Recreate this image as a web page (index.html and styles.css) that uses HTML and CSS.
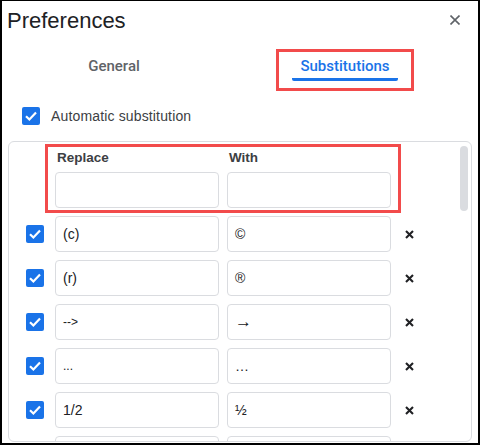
FILE: index.html
```html
<!DOCTYPE html>
<html lang="en">
<head>
<meta charset="utf-8">
<title>Preferences</title>
<link rel="stylesheet" href="styles.css">
</head>
<body>
<div class="frame">
  <div class="titlebar">
    <h1 class="title">Preferences</h1>
    <svg class="close" width="10" height="10" viewBox="0 0 10 10"><path d="M0.5 0.5L9.5 9.5M9.5 0.5L0.5 9.5" stroke="#5f6368" stroke-width="1.6" fill="none"/></svg>
  </div>
  <div class="tabs">
    <div class="tab">General</div>
    <div class="tab-active">
      <span class="tab-label">Substitutions</span>
    </div>
  </div>
  <label class="auto">
    <span class="cb"><svg width="18" height="18" viewBox="0 0 18 18"><path d="M4 9.2L7.4 12.5L14 5.6" stroke="#fff" stroke-width="2.2" fill="none"/></svg></span>
    <span class="auto-label">Automatic substitution</span>
  </label>
  <div class="panel">
    <div class="scrollbar"></div>
    <div class="header">
      <div class="header-labels">
        <span class="hl">Replace</span>
        <span class="hl">With</span>
      </div>
      <div class="header-inputs">
        <div class="input"></div>
        <div class="input"></div>
      </div>
    </div>
    <div class="rows">
      <div class="row">
        <span class="cb"><svg width="18" height="18" viewBox="0 0 18 18"><path d="M4 9.2L7.4 12.5L14 5.6" stroke="#fff" stroke-width="2.2" fill="none"/></svg></span>
        <div class="input">(c)</div>
        <div class="input">©</div>
        <svg class="del" width="9" height="9" viewBox="0 0 9 9"><path d="M1 1L8 8M8 1L1 8" stroke="#202124" stroke-width="2.1" fill="none"/></svg>
      </div>
      <div class="row">
        <span class="cb"><svg width="18" height="18" viewBox="0 0 18 18"><path d="M4 9.2L7.4 12.5L14 5.6" stroke="#fff" stroke-width="2.2" fill="none"/></svg></span>
        <div class="input">(r)</div>
        <div class="input">®</div>
        <svg class="del" width="9" height="9" viewBox="0 0 9 9"><path d="M1 1L8 8M8 1L1 8" stroke="#202124" stroke-width="2.1" fill="none"/></svg>
      </div>
      <div class="row">
        <span class="cb"><svg width="18" height="18" viewBox="0 0 18 18"><path d="M4 9.2L7.4 12.5L14 5.6" stroke="#fff" stroke-width="2.2" fill="none"/></svg></span>
        <div class="input small">--&gt;</div>
        <div class="input arrow">→</div>
        <svg class="del" width="9" height="9" viewBox="0 0 9 9"><path d="M1 1L8 8M8 1L1 8" stroke="#202124" stroke-width="2.1" fill="none"/></svg>
      </div>
      <div class="row">
        <span class="cb"><svg width="18" height="18" viewBox="0 0 18 18"><path d="M4 9.2L7.4 12.5L14 5.6" stroke="#fff" stroke-width="2.2" fill="none"/></svg></span>
        <div class="input small">...</div>
        <div class="input">…</div>
        <svg class="del" width="9" height="9" viewBox="0 0 9 9"><path d="M1 1L8 8M8 1L1 8" stroke="#202124" stroke-width="2.1" fill="none"/></svg>
      </div>
      <div class="row">
        <span class="cb"><svg width="18" height="18" viewBox="0 0 18 18"><path d="M4 9.2L7.4 12.5L14 5.6" stroke="#fff" stroke-width="2.2" fill="none"/></svg></span>
        <div class="input">1/2</div>
        <div class="input">½</div>
        <svg class="del" width="9" height="9" viewBox="0 0 9 9"><path d="M1 1L8 8M8 1L1 8" stroke="#202124" stroke-width="2.1" fill="none"/></svg>
      </div>
      <div class="row">
        <span class="cb"><svg width="18" height="18" viewBox="0 0 18 18"><path d="M4 9.2L7.4 12.5L14 5.6" stroke="#fff" stroke-width="2.2" fill="none"/></svg></span>
        <div class="input"></div>
        <div class="input"></div>
        <svg class="del" width="9" height="9" viewBox="0 0 9 9"><path d="M1 1L8 8M8 1L1 8" stroke="#202124" stroke-width="2.1" fill="none"/></svg>
      </div>
    </div>
  </div>
</div>
</body>
</html>
```
FILE: styles.css
```css
* { box-sizing: border-box; }
html, body { margin: 0; padding: 0; background: #fff; }
body {
  font-family: "Liberation Sans", Arial, sans-serif;
  color: #202124;
}
.frame {
  width: 480px;
  height: 445px;
  border-style: solid;
  border-color: #000;
  border-width: 1px 2px 2px 2px;
  overflow: hidden;
  background: #fff;
}
.titlebar {
  display: flex;
  align-items: center;
  justify-content: space-between;
  padding: 7px 18px 0 5px;
}
.title {
  margin: 0;
  font-size: 22px;
  line-height: 26px;
  font-weight: normal;
  color: #202124;
}
.close { display: block; margin-top: -2px; }
.tabs {
  display: flex;
  align-items: flex-start;
  margin-top: 15px;
}
.tab {
  width: 224px;
  text-align: center;
  padding-top: 9px;
  font-family: Roboto, "Liberation Sans", sans-serif;
  font-weight: 500;
  font-size: 15px;
  line-height: 16px;
  color: #5f6368;
}
.tab-active {
  margin-left: 50px;
  width: 138px;
  height: 42px;
  border: 3px solid #f24b4b;
  display: flex;
  justify-content: center;
  padding-top: 6px;
}
.tab-label {
  display: block;
  padding: 0 8px 4px;
  border-bottom: 3px solid #1a73e8;
  border-radius: 0 0 2px 2px;
  height: 23px;
  font-family: Roboto, "Liberation Sans", sans-serif;
  font-weight: 500;
  font-size: 15px;
  line-height: 16px;
  color: #1a73e8;
}
.auto {
  display: flex;
  align-items: center;
  gap: 11px;
  margin-top: 16px;
  padding-left: 20px;
  height: 18px;
}
.cb {
  display: block;
  width: 18px;
  height: 18px;
  border-radius: 2px;
  background: #1a73e8;
  flex: none;
}
.cb svg { display: block; }
.auto-label {
  font-size: 14px;
  color: #3c4043;
  letter-spacing: 0.15px;
}
.panel {
  position: relative;
  margin: 16px 0 0 6px;
  width: 464px;
  height: 301px;
  border: 1px solid #dadce0;
  border-radius: 6px;
  overflow: hidden;
  padding-top: 2px;
}
.scrollbar {
  position: absolute;
  top: 4px;
  right: 3px;
  width: 8px;
  height: 65px;
  border-radius: 4px;
  background: #dadce0;
}
.header {
  margin-left: 36px;
  width: 356px;
  border: 3px solid #f24b4b;
  padding: 3px 7px 2px;
}
.header-labels {
  display: flex;
  gap: 8px;
  height: 16px;
}
.hl {
  width: 164px;
  padding-left: 2px;
  font-size: 13.5px;
  font-weight: bold;
  line-height: 16px;
  color: #3c4043;
}
.header-inputs {
  display: flex;
  gap: 8px;
  margin-top: 6px;
}
.input {
  width: 164px;
  height: 36px;
  border: 1px solid #dadce0;
  border-radius: 4px;
  padding-left: 7px;
  font-size: 14px;
  line-height: 34px;
  color: #202124;
  flex: none;
}
.input.small { font-size: 12px; }
.input.arrow { font-size: 17px; }
.rows {
  display: flex;
  flex-direction: column;
  gap: 8px;
  margin-top: 3px;
  padding-left: 17px;
}
.row {
  display: flex;
  align-items: center;
  height: 36px;
}
.row .cb { margin-right: 11px; }
.row .input + .input { margin-left: 8px; }
.del { display: block; margin-left: 14px; }
```
